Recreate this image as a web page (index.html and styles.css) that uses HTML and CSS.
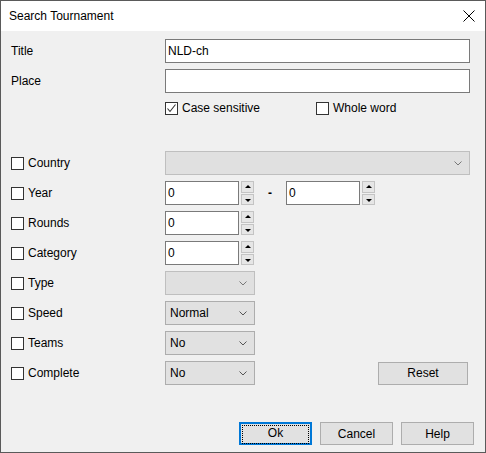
FILE: index.html
```html
<!DOCTYPE html>
<html lang="en">
<head>
    <meta charset="UTF-8">
    <title>Search Tournament</title>
    <link rel="stylesheet" href="styles.css">
</head>
<body>
<div class="window">
    <div class="titlebar">
        <span>Search Tournament</span>
        <svg class="close" width="12" height="12" viewBox="0 0 12 12"><path d="M0.5 0.5 L11.5 11.5 M11.5 0.5 L0.5 11.5" stroke="#000" stroke-width="1" fill="none"/></svg>
    </div>

    <div class="content">
        <div class="row">
            <span class="lbl">Title</span>
            <div class="edit wide">NLD-ch</div>
        </div>
        <div class="row">
            <span class="lbl">Place</span>
            <div class="edit wide"></div>
        </div>
        <div class="row opts">
            <span class="lbl"></span>
            <label class="chk first"><span class="box"><svg width="11" height="11" viewBox="0 0 11 11"><path d="M1.5 5.5 L4 8.5 L9.5 1.5" stroke="#333" stroke-width="1.1" fill="none"/></svg></span>Case sensitive</label>
            <label class="chk"><span class="box"></span>Whole word</label>
        </div>

        <div class="row country">
            <label class="lbl chk"><span class="box"></span>Country</label>
            <div class="combo wide disabled"><span></span><svg width="8" height="5" viewBox="0 0 8 5"><path d="M0.5 0.5 L4 4 L7.5 0.5" stroke="#777" fill="none"/></svg></div>
        </div>
        <div class="row">
            <label class="lbl chk"><span class="box"></span>Year</label>
            <div class="edit num">0</div>
            <div class="spin"><span class="up"></span><span class="down"></span></div>
            <span class="dash">-</span>
            <div class="edit num">0</div>
            <div class="spin"><span class="up"></span><span class="down"></span></div>
        </div>
        <div class="row">
            <label class="lbl chk"><span class="box"></span>Rounds</label>
            <div class="edit num">0</div>
            <div class="spin"><span class="up"></span><span class="down"></span></div>
        </div>
        <div class="row">
            <label class="lbl chk"><span class="box"></span>Category</label>
            <div class="edit num">0</div>
            <div class="spin"><span class="up"></span><span class="down"></span></div>
        </div>
        <div class="row">
            <label class="lbl chk"><span class="box"></span>Type</label>
            <div class="combo small disabled"><span></span><svg width="8" height="5" viewBox="0 0 8 5"><path d="M0.5 0.5 L4 4 L7.5 0.5" stroke="#777" fill="none"/></svg></div>
        </div>
        <div class="row">
            <label class="lbl chk"><span class="box"></span>Speed</label>
            <div class="combo small"><span>Normal</span><svg width="8" height="5" viewBox="0 0 8 5"><path d="M0.5 0.5 L4 4 L7.5 0.5" stroke="#555" fill="none"/></svg></div>
        </div>
        <div class="row">
            <label class="lbl chk"><span class="box"></span>Teams</label>
            <div class="combo small"><span>No</span><svg width="8" height="5" viewBox="0 0 8 5"><path d="M0.5 0.5 L4 4 L7.5 0.5" stroke="#555" fill="none"/></svg></div>
        </div>
        <div class="row">
            <label class="lbl chk"><span class="box"></span>Complete</label>
            <div class="combo small"><span>No</span><svg width="8" height="5" viewBox="0 0 8 5"><path d="M0.5 0.5 L4 4 L7.5 0.5" stroke="#555" fill="none"/></svg></div>
            <button class="btn reset">Reset</button>
        </div>
    </div>

    <div class="buttons">
        <button class="btn default"><span>Ok</span></button>
        <button class="btn">Cancel</button>
        <button class="btn">Help</button>
    </div>
</div>
</body>
</html>
```

FILE: styles.css
```css
body {
    margin: 0;
    font-family: "Liberation Sans", Arial, sans-serif;
    font-size: 12px;
    color: #000;
    background: #f0f0f0;
}
.window {
    width: 486px;
    height: 453px;
    box-sizing: border-box;
    border: 1px solid #5a5a5a;
    background-color: #f0f0f0;
    display: flex;
    flex-direction: column;
}
.titlebar {
    height: 30px;
    background: #fff;
    display: flex;
    align-items: center;
    padding: 0 9px 0 8px;
    justify-content: space-between;
}
.close {
    margin-right: 1px;
}
.content {
    padding: 8px 15px 0 10px;
    display: flex;
    flex-direction: column;
    gap: 6px;
}
.row {
    display: flex;
    align-items: center;
    height: 24px;
}
.lbl {
    width: 154px;
    flex: none;
}
.opts {
    height: 16px;
    margin-top: 1px;
}
.country {
    margin-top: 29px;
}
.chk {
    display: flex;
    align-items: center;
}
.chk.first {
    width: 151px;
}
.box {
    width: 11px;
    height: 11px;
    border: 1px solid #333;
    background: #fff;
    margin-right: 4px;
    flex: none;
    display: flex;
}
.edit {
    height: 24px;
    box-sizing: border-box;
    border: 1px solid #7a7a7a;
    background: #fff;
    padding: 0 2px;
    line-height: 22px;
}
.wide {
    flex: 1;
}
.num {
    width: 74px;
}
.spin {
    width: 13px;
    height: 24px;
    margin-left: 2px;
    display: flex;
    flex-direction: column;
    gap: 1px;
}
.spin span {
    flex: 1;
    box-sizing: border-box;
    border: 1px solid #c4c4c4;
    background: #e6e6e6;
    position: relative;
}
.spin span::after {
    content: "";
    position: absolute;
    left: 3px;
    top: 3px;
    border-left: 3px solid transparent;
    border-right: 3px solid transparent;
}
.spin .up::after {
    border-bottom: 3px solid #000;
}
.spin .down::after {
    border-top: 3px solid #000;
    top: 4px;
}
.dash {
    width: 32px;
    text-align: center;
    font-weight: bold;
}
.combo {
    height: 24px;
    box-sizing: border-box;
    border: 1px solid #adadad;
    background: #e1e1e1;
    display: flex;
    align-items: center;
    justify-content: space-between;
    padding: 0 7px 0 4px;
}
.combo.disabled {
    border-color: #bfbfbf;
    background: #e0e0e0;
}
.small {
    width: 90px;
}
.btn {
    font: inherit;
    color: #000;
    height: 23px;
    box-sizing: border-box;
    border: 1px solid #adadad;
    background: #e1e1e1;
    padding: 0;
}
.reset {
    width: 90px;
    margin-left: auto;
    margin-right: 2px;
}
.buttons {
    margin-top: auto;
    display: flex;
    justify-content: flex-end;
    gap: 8px;
    padding: 0 11px 7px 0;
}
.buttons .btn {
    width: 73px;
}
.btn.default {
    border: 2px solid #0078d7;
    padding: 1px;
}
.btn.default span {
    display: block;
    height: 100%;
    line-height: 15px;
    border: 1px dotted #000;
}
```
